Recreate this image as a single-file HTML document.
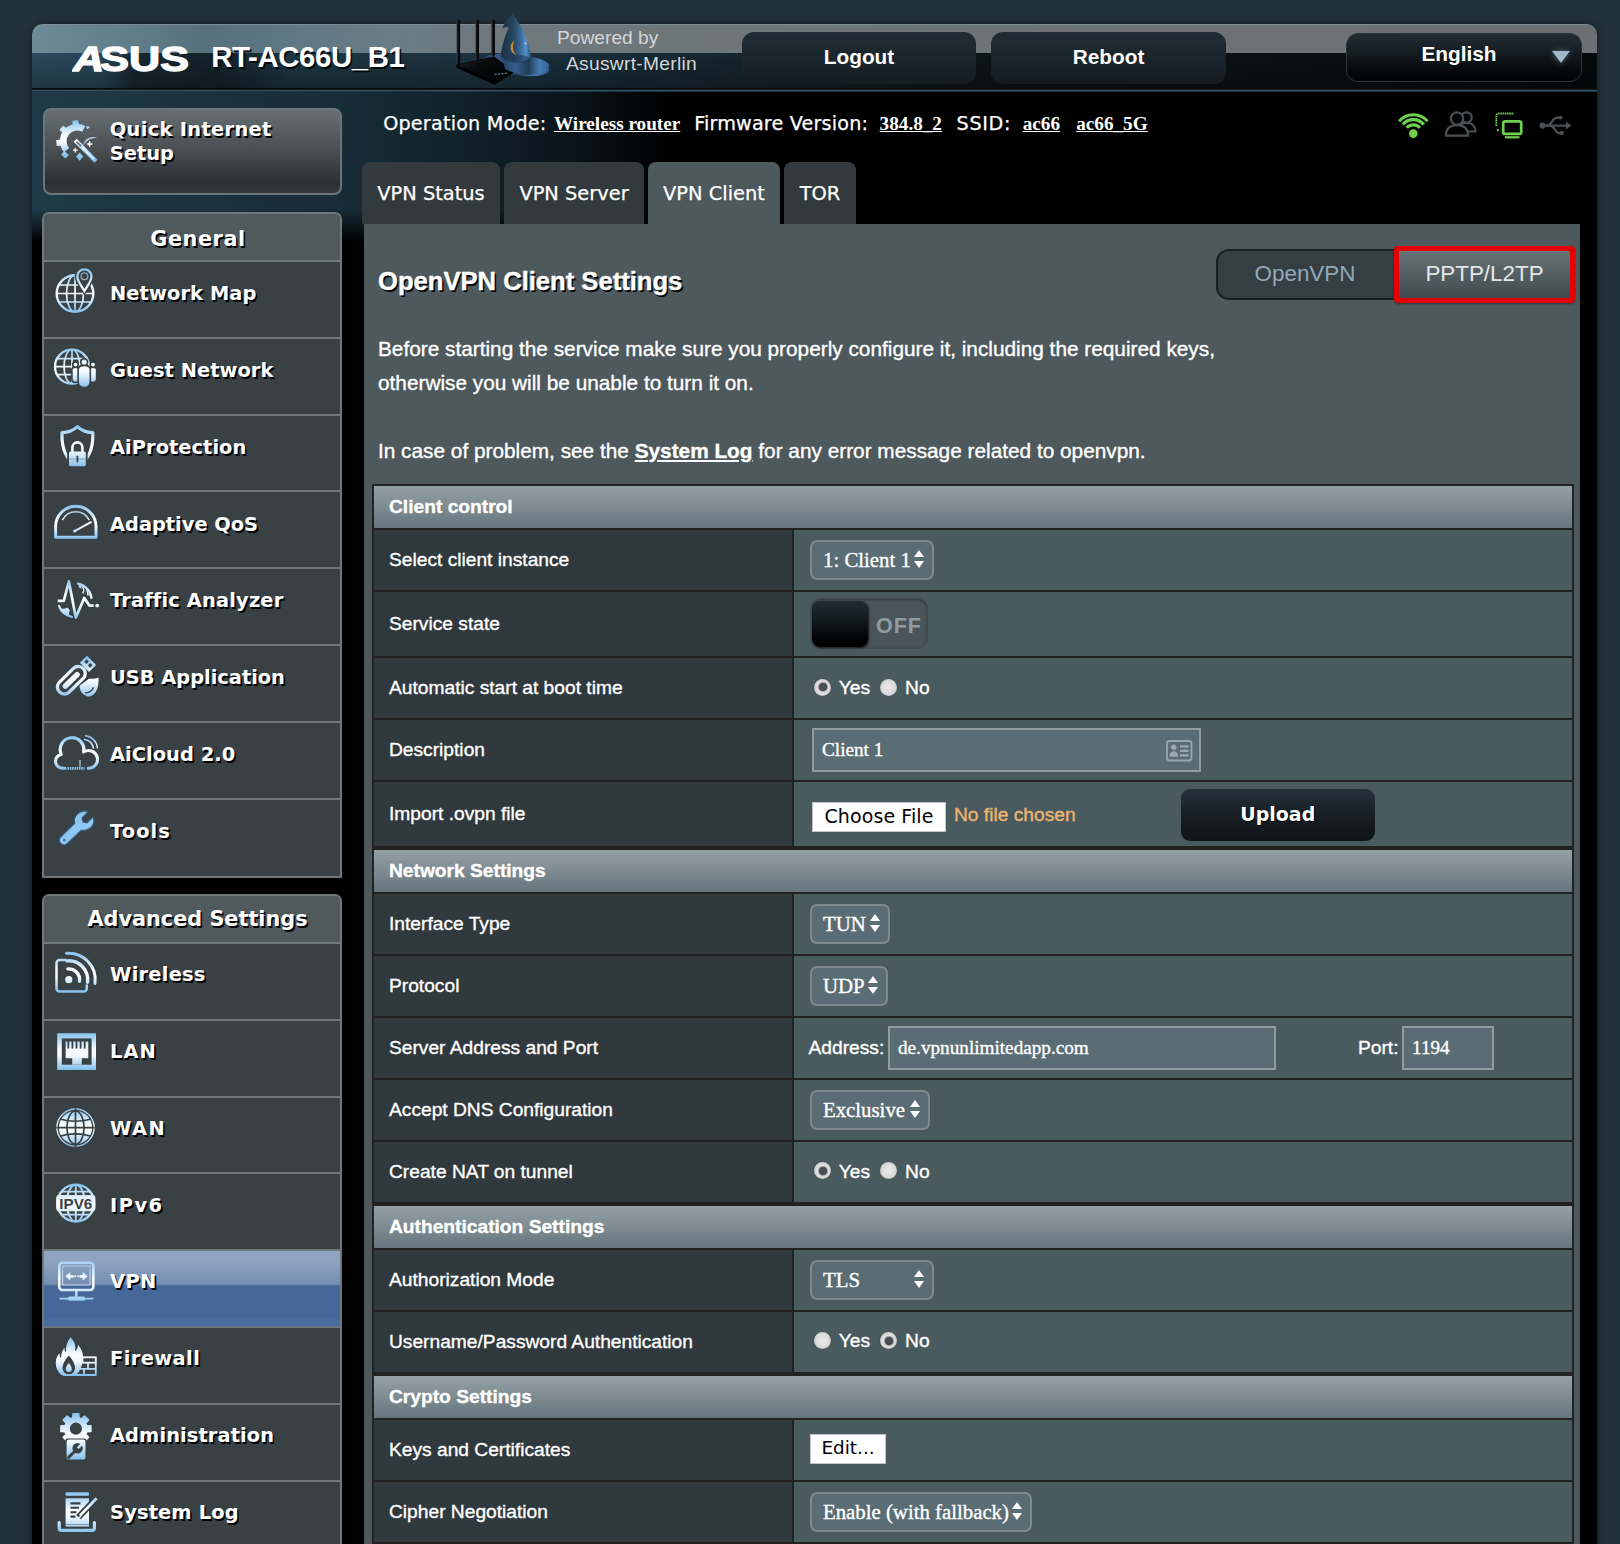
<!DOCTYPE html>
<html lang="en">
<head>
<meta charset="utf-8">
<title>ASUS Wireless Router RT-AC66U_B1 - OpenVPN Client Settings</title>
<style>
*{box-sizing:border-box;margin:0;padding:0}
html,body{width:1620px;height:1544px;overflow:hidden}
body{background:#22323d;font-family:"Liberation Sans",Arial,sans-serif;color:#fff;position:relative}
.a{position:absolute}
a{color:#fff;text-decoration:underline}
.dj{font-family:"DejaVu Sans","Liberation Sans",sans-serif}
.sf{font-family:"Liberation Serif","DejaVu Serif",serif}
#frame{left:32px;top:24px;width:1565px;height:1540px;background:#000;border-radius:10px 10px 0 0;overflow:hidden;box-shadow:0 0 8px rgba(0,0,0,.45)}
#banner{left:0;top:0;width:1565px;height:29px;background:linear-gradient(90deg,#6c8a98 0,#617c89 7%,#56707c 11%,#5d7783 16%,#697d86 23%,#6e787d 29%,#6d7477 50%,#6b7073 100%);border-top:1px solid #7d8d95}
#bannerhi{left:0;top:29px;width:1565px;height:37px;background:linear-gradient(90deg,#2a4a5c 0,#28475a 4.5%,#18282f 6.5%,#14222a 12%,#1d3642 16.5%,#1b323e 30%,#15252d 45%,#0d161b 60%,#070b0d 100%)}
#bannerdark{left:0;top:29px;width:1565px;height:37px;background:linear-gradient(180deg,rgba(0,0,0,0) 0,rgba(0,0,0,.28) 100%)}
#hline{left:0;top:64px;width:1565px;height:4px;background:linear-gradient(180deg,#05090b 0,#05090b 30%,#3a5361 55%,#1a2c36 100%)}
#leftcol{left:0;top:68px;width:660px;height:150px;background:linear-gradient(180deg,rgba(0,0,0,0) 0,rgba(0,0,0,0) 78%,#000 100%),linear-gradient(90deg,#1f3b4a 0,#1d3744 60px,#172d38 300px,#12232c 420px,#0a141a 540px,#000 640px)}
.hbtn{height:52px;border-radius:12px;background:linear-gradient(180deg,#212d34 0,#1a242b 55%,#141c21 100%);text-align:center;font-weight:bold;font-size:20.8px;line-height:50px;color:#fff}
.mblock{left:42px;width:300px;border:2px solid #70777a;border-radius:7px 7px 0 0;background:#3a4144;overflow:hidden}
.mhead{left:0;top:0;width:296px;height:46px;padding:0 0 0 9px;background:#50595c;text-align:center;font-weight:bold;font-size:20.8px;line-height:46px;text-shadow:1.6px 1.6px 0 #000}
.ml{left:0;width:296px;height:2px;background:#70777a}
.mt{left:66px;font-weight:bold;font-size:19.4px;line-height:24px;text-shadow:1.6px 1.6px 0 #000;white-space:nowrap;letter-spacing:-.05px}
.cur{left:0;width:296px;background:linear-gradient(180deg,#8fa4c0 0,#8fa4c0 10px,#8399b9 20px,#7891b4 33px,#4a6a9b 35px,#466799 36px,#466799 67px,#4a6ca1 69px,#4a6ca1 100%)}
.tab{top:162px;height:62px;border-radius:8px 8px 0 0;background:#333a3e;font-size:19.4px;line-height:64px;-webkit-text-stroke:.25px #fff;text-align:center;color:#fff}
.tab.on{background:#4d595d}
#panel{left:364px;top:224px;width:1216px;height:1400px;background:#4d595d}
.txt{white-space:nowrap;font-size:20.8px;line-height:26px;-webkit-text-stroke:.35px #fff}
.th{left:372px;width:1202px;height:46px;border:2px solid #222;background:linear-gradient(180deg,#93a1a6 0,#7e8c92 50%,#66757c 100%);font-weight:bold;font-size:19.2px;line-height:41px;padding-left:15px;white-space:nowrap;-webkit-text-stroke:.35px #fff}
.row{left:372px;width:1202px;border:2px solid #222;border-top:none;background:#4a5b60}
.row .l{position:absolute;left:0;top:0;bottom:0;width:420px;background:#30393d;border-right:2px solid #222;font-size:19.2px;padding-left:15px;display:flex;align-items:center;white-space:nowrap;-webkit-text-stroke:.35px #fff}
.sel{position:absolute;left:436px;height:40px;border:2px solid #7f8a8e;border-radius:7px;background:#5a6d74;font-family:"Liberation Serif",serif;font-size:20.8px;line-height:35.5px;padding-left:11px;white-space:nowrap;color:#fff;-webkit-text-stroke:.35px #fff}
.sel i{position:absolute;right:8px;top:8px;width:10px;height:20px}
.sel i:before{content:"";position:absolute;left:0;top:0;border:5px solid transparent;border-top:none;border-bottom:7px solid #fff}
.sel i:after{content:"";position:absolute;left:0;top:10.5px;border:5px solid transparent;border-bottom:none;border-top:7px solid #fff}
.inp{position:absolute;height:44px;border:2px solid #909c9f;background:#5a6d74;font-family:"Liberation Serif",serif;font-size:19.2px;line-height:40px;padding-left:8px;white-space:nowrap;-webkit-text-stroke:.35px #fff}
.rad{position:absolute;width:17px;height:17px;border-radius:50%;background:radial-gradient(circle at 50% 50%,#e9e9e9 0,#dcdcdc 55%,#b9b9b9 80%,#8c8f90 100%);box-shadow:0 0 0 1px rgba(70,80,84,.55)}
.rad.on:after{content:"";position:absolute;left:4.5px;top:4.5px;width:8px;height:8px;border-radius:50%;background:#4a4e50;box-shadow:0 0 0 1px rgba(90,90,90,.5)}
.rl{position:absolute;font-size:19.2px;line-height:24px;white-space:nowrap;-webkit-text-stroke:.35px #fff}
</style>
</head>
<body>
<div id="frame" class="a">
<div id="banner" class="a"></div><div id="bannerhi" class="a"></div><div id="bannerdark" class="a"></div><div id="leftcol" class="a"></div><div id="hline" class="a"></div>
</div>
<div class="a" style="left:71.5px;top:40px;width:130px;height:40px"><svg width="130" height="40" viewBox="0 0 130 40"><text x="1" y="31.4" font-family="Liberation Sans,sans-serif" font-weight="bold" font-size="34.5" fill="#fff" stroke="#fff" stroke-width="1.3" textLength="116" lengthAdjust="spacingAndGlyphs"><tspan font-style="italic">A</tspan><tspan dx="-3">SUS</tspan></text></svg></div>
<div class="a" style="left:211.3px;top:38.5px;font-weight:bold;font-size:29.4px;line-height:36px;letter-spacing:-.4px;white-space:nowrap;text-shadow:1.6px 1.6px 0 rgba(0,0,0,.85)">RT-AC66U_B1</div>
<div class="a" style="left:450px;top:10px;width:104px;height:80px"><svg width="110" height="84" viewBox="0 0 110 84"><defs><linearGradient id="hat1" x1="0" y1="0" x2="1" y2="0"><stop offset="0" stop-color="#1b3144"/><stop offset=".42" stop-color="#27465e"/><stop offset=".66" stop-color="#3b6b9c"/><stop offset=".82" stop-color="#5690cc"/><stop offset="1" stop-color="#254568"/></linearGradient><linearGradient id="hat2" x1="0" y1="0" x2="1" y2="0"><stop offset="0" stop-color="#27446a"/><stop offset=".28" stop-color="#365d8c"/><stop offset=".55" stop-color="#213c55"/><stop offset=".8" stop-color="#477db6"/><stop offset="1" stop-color="#345f92"/></linearGradient><linearGradient id="rt1" x1="0" y1="0" x2="1" y2="1"><stop offset="0" stop-color="#2a3034"/><stop offset=".35" stop-color="#0a0c0d"/><stop offset="1" stop-color="#000"/></linearGradient><linearGradient id="ant" x1="0" y1="0" x2="1" y2="0"><stop offset="0" stop-color="#3a4044"/><stop offset=".45" stop-color="#0c0e0f"/><stop offset="1" stop-color="#000"/></linearGradient></defs><ellipse cx="66" cy="55" rx="33.500" ry="10" fill="url(#hat2)" transform="rotate(9 66 55)"/><rect x="6.5" y="9.6" width="3.600" height="45.4" rx="1.600" fill="url(#ant)"/><rect x="25.4" y="9.6" width="3.600" height="40.4" rx="1.600" fill="url(#ant)"/><rect x="41.3" y="9.6" width="3.600" height="36.4" rx="1.600" fill="url(#ant)"/><path d="M6.3,54.8L44.0,46.6L63.5,60.5L63.5,63.0L44.5,74.8L6.3,57.8Z" fill="#000"/><path d="M7.5,54.9L44.0,47.2L62.0,60.6L44.4,71.2Z" fill="url(#rt1)"/><rect x="44.5" y="63.5" width="2.200" height="1.500" fill="#4a6f90"/><rect x="47.9" y="63.2" width="2.200" height="1.500" fill="#4a6f90"/><rect x="51.3" y="62.9" width="2.200" height="1.500" fill="#4a6f90"/><rect x="54.7" y="62.6" width="2.200" height="1.500" fill="#4a6f90"/><path d="M55.0,59.0C62.0,63.0 74.0,66.0 86.0,64.5C95.0,63.0 100.0,58.0 99.0,54.5C97.0,51.0 90.0,48.5 81.0,47.0L53.0,50.0Z" fill="url(#hat2)"/><path d="M50.5,46.0C52.5,34.0 55.5,24.0 59.0,17.5C57.0,16.3 54.5,17.0 52.3,18.6C54.5,11.5 59.0,6.0 63.3,4.6C71.0,15.0 78.5,31.0 81.5,46.5C76.0,53.5 58.0,54.0 50.5,46.0Z" fill="url(#hat1)"/><ellipse cx="66" cy="48.5" rx="15.500" ry="4.200" fill="#1e3850" opacity=".55" transform="rotate(4 66 48.5)"/><path d="M64.5,30.5C59.0,34.0 59.0,42.0 66.5,45.5C62.5,41.5 62.0,35.5 64.5,30.5Z" fill="#d08a36"/><circle cx="75.5" cy="33.5" r=".9" fill="#e3d9b8"/></svg></div>
<div class="a" style="left:557px;top:26px;font-size:19.2px;line-height:24px;color:#d3d6d8;white-space:nowrap">Powered by</div>
<div class="a" style="left:566px;top:52px;font-size:19.2px;line-height:24px;color:#d3d6d8;white-space:nowrap;letter-spacing:.3px">Asuswrt-Merlin</div>
<div class="a hbtn" style="left:742px;top:32px;width:234px;line-height:49px">Logout</div>
<div class="a hbtn" style="left:991px;top:32px;width:235px;line-height:49px">Reboot</div>
<div class="a hbtn" style="left:1345.5px;top:32.5px;width:236px;height:49px;border:1.6px solid #2b363d;background:linear-gradient(180deg,#222d34 0,#121a1f 45%,#05080a 80%,#020304 100%);line-height:40px;padding-right:9px">English<i class="a" style="right:11px;top:17.5px;border:9px solid transparent;border-top:12px solid #a3b8cb;border-bottom:none;filter:drop-shadow(0 0 3px rgba(140,170,200,.55))"></i></div>
<div class="a dj" style="left:383.2px;top:112.3px;font-size:19.2px;line-height:24px;white-space:nowrap;letter-spacing:0.2px;-webkit-text-stroke:.25px #fff">Operation Mode:</div>
<a class="a sf" style="left:554px;top:112px;font-weight:bold;font-size:19.2px;line-height:24px;white-space:nowrap">Wireless router</a>
<div class="a dj" style="left:694.2px;top:112.3px;font-size:19.2px;line-height:24px;white-space:nowrap;letter-spacing:0.17px;-webkit-text-stroke:.25px #fff">Firmware Version:</div>
<a class="a sf" style="left:879.6px;top:112px;font-weight:bold;font-size:19.2px;line-height:24px;white-space:nowrap">384.8_2</a>
<div class="a dj" style="left:956.5px;top:112.3px;font-size:19.2px;line-height:24px;white-space:nowrap;letter-spacing:0.7px;-webkit-text-stroke:.25px #fff">SSID:</div>
<a class="a sf" style="left:1022.7px;top:112px;font-weight:bold;font-size:19.2px;line-height:24px;white-space:nowrap">ac66</a>
<a class="a sf" style="left:1076.2px;top:112px;font-weight:bold;font-size:19.2px;line-height:24px;white-space:nowrap">ac66_5G</a>
<div class="a" style="left:1394px;top:108px;width:184px;height:36px"><svg width="184" height="36" viewBox="0 0 184 36"><circle cx="19.3" cy="25.6" r="4.300" fill="#6fd24d"/><path d="M12.7,19.8A8.8,8.8 0 0 1 25.9,19.8" fill="none" stroke="#6fd24d" stroke-width="3.2"/><path d="M8.8,16.5A13.9,13.9 0 0 1 29.8,16.5" fill="none" stroke="#6fd24d" stroke-width="3.2"/><path d="M5.1,13.3A18.8,18.8 0 0 1 33.5,13.3" fill="none" stroke="#6fd24d" stroke-width="3"/><g fill="#000" stroke="#4b5053" stroke-width="2.200"><circle cx="72.5" cy="9.5" r="5.200"/><path d="M63,23.5c0,-5.500 4,-8.500 9.500,-8.500s9,3 9,8.500Z"/><circle cx="63" cy="10.599999999999994" r="6.200"/><path d="M52,27.599999999999994c0,-7 4,-10.500 11,-10.500s11,3.500 11,10.500Z"/></g><rect x="109.20000000000005" y="13.299999999999997" width="18" height="12.600" rx="2" fill="none" stroke="#6fd24d" stroke-width="2.700"/><path d="M111,29.30000000000001H125.5" stroke="#6fd24d" stroke-width="2.200"/><path d="M102.29999999999995,18V8a2.500,2.500 0 0 1 2.500,-2.500H120" fill="none" stroke="#6fd24d" stroke-width="1.800" stroke-dasharray="1.500 .7"/><rect x="102.79999999999995" y="21" width="2.200" height="2.400" fill="#6fd24d" opacity=".8"/><g fill="none" stroke="#4b5053" stroke-width="2.200" stroke-linecap="round"><path d="M149,17.599999999999994H172"/><path d="M153,17.599999999999994c5,0 5,-8 10,-8h2.500"/><path d="M156,17.599999999999994c5,0 5,7.600 9,7.600h2"/></g><circle cx="148.5" cy="17.599999999999994" r="3.100" fill="#4b5053"/><path d="M172,13.599999999999994l5.500,4l-5.500,4Z" fill="#4b5053"/><circle cx="166.5" cy="9.599999999999994" r="1.900" fill="#4b5053"/><rect x="166" y="23.19999999999999" width="3.600" height="3.600" fill="#4b5053"/></svg></div>
<div class="a" style="left:43px;top:108px;width:299px;height:87px;border:2px solid #6d7477;border-radius:8px;background:linear-gradient(180deg,#676e71 0,#4b5154 45%,#2c3032 88%,#36393b 100%)"><div class="a" style="left:7px;top:6px;width:52px;height:52px"><svg width="52" height="52" viewBox="0 0 52 52"><defs><linearGradient id="g1" gradientUnits="userSpaceOnUse" x1="0" y1="4" x2="0" y2="40"><stop offset="0" stop-color="#84c1ef"/><stop offset=".42" stop-color="#f6fbff"/><stop offset=".6" stop-color="#f6fbff"/><stop offset="1" stop-color="#7fbdec"/></linearGradient></defs><path d="M33.3,10.0A17.2,17.2 0 0 0 12.0,36.3L17.1,32.0A10.6,10.6 0 0 1 30.2,15.8Z" fill="url(#g1)"/><path d="M20.7,9.6L20.5,4.7L26.3,4.2L26.9,9.1Z" fill="url(#g1)"/><path d="M11.0,17.3L7.4,14.1L11.1,9.6L15.0,12.6Z" fill="url(#g1)"/><path d="M9.6,29.7L4.7,29.9L4.2,24.1L9.1,23.5Z" fill="url(#g1)"/><path d="M16.9,39.1L13.5,42.6L9.1,38.7L12.3,34.9Z" fill="url(#g1)"/><path d="M33.8,10.3l4.500,0.500l-3,2.500Z" fill="url(#g1)"/><path d="M31,30C32,23 39,18.5 46,22.5C40,21 35,24 31,30Z" fill="#cfe4f5" opacity=".85"/><path d="M23.200000000000003,24.30000000000001L44,45.30000000000001" stroke="url(#g1)" stroke-width="4.400"/><path d="M24.5,25.599999999999994L29.200000000000003,30.30000000000001" stroke="#6d7f8d" stroke-width="2"/><path d="M30.5,31.599999999999994L42,43.30000000000001" stroke="#fff" stroke-width="1.600" opacity=".8"/><path d="M37.599999999999994,25.2Q37.599999999999994,28 40.39999999999999,28Q37.599999999999994,28 37.599999999999994,30.8Q37.599999999999994,28 34.8,28Q37.599999999999994,28 37.599999999999994,25.2Z" fill="#fff" stroke="#fff" stroke-width=".8"/><path d="M23.299999999999997,31.899999999999988Q23.299999999999997,34.19999999999999 25.599999999999998,34.19999999999999Q23.299999999999997,34.19999999999999 23.299999999999997,36.499999999999986Q23.299999999999997,34.19999999999999 20.999999999999996,34.19999999999999Q23.299999999999997,34.19999999999999 23.299999999999997,31.899999999999988Z" fill="#dfeaf3" stroke="#dfeaf3" stroke-width=".8"/><path d="M27.599999999999994,36.599999999999994l3.600,4l-3.600,4.200l-3.600,-4.200Z" fill="#8ec8f2"/></svg></div><div class="a dj" style="left:64.8px;top:8.3px;font-weight:bold;font-size:19.4px;line-height:23.8px;text-shadow:1.6px 1.6px 0 #000;white-space:nowrap"><span style="letter-spacing:.32px">Quick Internet</span><br>Setup</div></div>
<div class="a mblock dj" style="top:212px;height:666px"><div class="a mhead" style="padding:2px 0 0 12px;letter-spacing:.55px">General</div>
<div class="a ml" style="top:46px"></div>
<div class="a" style="left:1px;top:49.9px;width:62px;height:62px"><svg width="60" height="60" viewBox="0 0 60 60" style="position:absolute;left:0;top:0;"><defs><linearGradient id="g2" gradientUnits="userSpaceOnUse" x1="0" y1="5" x2="0" y2="49"><stop offset="0" stop-color="#84c1ef"/><stop offset=".42" stop-color="#f6fbff"/><stop offset=".6" stop-color="#f6fbff"/><stop offset="1" stop-color="#7fbdec"/></linearGradient></defs><g fill="none" stroke="url(#g2)" stroke-width="2.4"><circle cx="30" cy="29.5" r="18.3"/><g stroke-width="1.7"><ellipse cx="30" cy="29.5" rx="8.5" ry="18.3"/><path d="M30,11.2V47.8M11.7,29.5H48.3M14,21.0H46M14,38.0H46"/></g></g><path d="M39.4,28.5C35,21 31.3,17 31.3,12.4a8.1,8.1 0 0 1 16.2,0C47.5,17 43.8,21 39.4,28.5Z" fill="#3a4144" stroke="#3a4144" stroke-width="3.2"/><path d="M39.4,27C35.5,20.5 32.3,16.6 32.3,12.4a7.1,7.1 0 0 1 14.2,0C46.5,16.6 43.3,20.5 39.4,27Z" fill="none" stroke="url(#g2)" stroke-width="2.2"/><circle cx="39.4" cy="12.2" r="3.4" fill="none" stroke="url(#g2)" stroke-width="1.2" opacity=".7"/></svg></div>
<div class="a mt" style="top:68.1px;letter-spacing:0.1px">Network Map</div>
<div class="a ml" style="top:123px"></div>
<div class="a" style="left:1px;top:126.7px;width:62px;height:62px"><svg width="60" height="60" viewBox="0 0 60 60" style="position:absolute;left:0;top:0;"><defs><linearGradient id="g3" gradientUnits="userSpaceOnUse" x1="0" y1="7" x2="0" y2="47"><stop offset="0" stop-color="#84c1ef"/><stop offset=".42" stop-color="#f6fbff"/><stop offset=".6" stop-color="#f6fbff"/><stop offset="1" stop-color="#7fbdec"/></linearGradient></defs><g fill="none" stroke="url(#g3)" stroke-width="2.3"><circle cx="27" cy="25.7" r="17"/><g stroke-width="1.7"><ellipse cx="27" cy="25.7" rx="8" ry="17"/><path d="M27,8.7V42.7M10,25.7H44M12,17.7H42M12,33.7H42"/></g></g><circle cx="30.5" cy="23.6" r="1.9" fill="#3a4144" stroke="#3a4144" stroke-width="3.4"/><path d="M27.7,28.96Q27.7,27 30.5,27Q33.3,27 33.3,28.96V37.42Q33.3,40.5 30.5,40.5Q27.7,40.5 27.7,37.42Z" fill="#3a4144" stroke="#3a4144" stroke-width="3.4"/><circle cx="48" cy="23.6" r="1.9" fill="#3a4144" stroke="#3a4144" stroke-width="3.4"/><path d="M45.2,28.96Q45.2,27 48,27Q50.8,27 50.8,28.96V37.42Q50.8,40.5 48,40.5Q45.2,40.5 45.2,37.42Z" fill="#3a4144" stroke="#3a4144" stroke-width="3.4"/><circle cx="30.5" cy="23.6" r="1.9" fill="url(#g3)"/><path d="M27.7,28.96Q27.7,27 30.5,27Q33.3,27 33.3,28.96V37.42Q33.3,40.5 30.5,40.5Q27.7,40.5 27.7,37.42Z" fill="url(#g3)"/><circle cx="48" cy="23.6" r="1.9" fill="url(#g3)"/><path d="M45.2,28.96Q45.2,27 48,27Q50.8,27 50.8,28.96V37.42Q50.8,40.5 48,40.5Q45.2,40.5 45.2,37.42Z" fill="url(#g3)"/><circle cx="39.2" cy="21" r="2.6" fill="#3a4144" stroke="#3a4144" stroke-width="3.2"/><path d="M33.900000000000006,28.91Q33.900000000000006,25.2 39.2,25.2Q44.5,25.2 44.5,28.91V39.97Q44.5,45.8 39.2,45.8Q33.900000000000006,45.8 33.900000000000006,39.97Z" fill="#3a4144" stroke="#3a4144" stroke-width="3.2"/><circle cx="39.2" cy="21" r="2.6" fill="url(#g3)"/><path d="M33.900000000000006,28.91Q33.900000000000006,25.2 39.2,25.2Q44.5,25.2 44.5,28.91V39.97Q44.5,45.8 39.2,45.8Q33.900000000000006,45.8 33.900000000000006,39.97Z" fill="url(#g3)"/></svg></div>
<div class="a mt" style="top:144.9px;letter-spacing:0.05px">Guest Network</div>
<div class="a ml" style="top:200px"></div>
<div class="a" style="left:1px;top:203.5px;width:62px;height:62px"><svg width="60" height="60" viewBox="0 0 60 60" style="position:absolute;left:0;top:0;"><defs><linearGradient id="g4" gradientUnits="userSpaceOnUse" x1="0" y1="7" x2="0" y2="49"><stop offset="0" stop-color="#84c1ef"/><stop offset=".42" stop-color="#f6fbff"/><stop offset=".6" stop-color="#f6fbff"/><stop offset="1" stop-color="#7fbdec"/></linearGradient></defs><path d="M32.4,8.6C28,12.8 22,14.4 17,14.6C16.6,28 19,41.5 32.4,47.6C45.8,41.5 48.2,28 47.8,14.6C42.8,14.4 36.8,12.8 32.4,8.6Z" fill="none" stroke="url(#g4)" stroke-width="3.2" stroke-linejoin="round"/><rect x="22.2" y="31.5" width="20.4" height="18.5" rx="2" fill="#3a4144"/><path d="M27.4,34V29.4a5,5 0 0 1 10,0V34" fill="none" stroke="#3a4144" stroke-width="6"/><path d="M27.4,34V29.4a5,5 0 0 1 10,0V34" fill="none" stroke="url(#g4)" stroke-width="2.6"/><rect x="24" y="33.4" width="16.8" height="14.8" rx="1.6" fill="url(#g4)"/><path d="M32.4,38.5V43.5" stroke="#3a4144" stroke-width="1.8" stroke-linecap="round"/><path d="M24.5,41H40.3" stroke="#3a4144" stroke-width=".7" opacity=".5"/></svg></div>
<div class="a mt" style="top:221.7px;letter-spacing:0.05px">AiProtection</div>
<div class="a ml" style="top:276px"></div>
<div class="a" style="left:1px;top:280.3px;width:62px;height:62px"><svg width="62" height="60" viewBox="0 0 62 60" style="position:absolute;left:0;top:0;"><defs><linearGradient id="g5" gradientUnits="userSpaceOnUse" x1="0" y1="11" x2="0" y2="45"><stop offset="0" stop-color="#84c1ef"/><stop offset=".42" stop-color="#f6fbff"/><stop offset=".6" stop-color="#f6fbff"/><stop offset="1" stop-color="#7fbdec"/></linearGradient></defs><path d="M10.6,43.2V32.5a20.2,20.2 0 0 1 40.4,0V43.2Z" fill="none" stroke="url(#g5)" stroke-width="3" stroke-linejoin="round"/><path d="M17.4,26.2A14.8,14.8 0 0 1 44.2,26.2" fill="none" stroke="url(#g5)" stroke-width="1.6" opacity=".9"/><path d="M29.6,37.2L46,28.2" stroke="url(#g5)" stroke-width="2" stroke-linecap="round"/><circle cx="29.8" cy="37" r="1.6" fill="url(#g5)"/></svg></div>
<div class="a mt" style="top:298.5px;letter-spacing:0px">Adaptive QoS</div>
<div class="a ml" style="top:353px"></div>
<div class="a" style="left:1px;top:357.1px;width:62px;height:62px"><svg width="60" height="60" viewBox="0 0 60 60" style="position:absolute;left:0;top:0;"><defs><linearGradient id="g6" gradientUnits="userSpaceOnUse" x1="0" y1="8" x2="0" y2="49"><stop offset="0" stop-color="#84c1ef"/><stop offset=".42" stop-color="#f6fbff"/><stop offset=".6" stop-color="#f6fbff"/><stop offset="1" stop-color="#7fbdec"/></linearGradient></defs><g fill="none" stroke="url(#g6)" stroke-width="2.2" stroke-linecap="round"><path d="M33,12.6A16.5,16.5 0 0 1 46.4,27"/><path d="M14,35A16.5,16.5 0 0 0 27,45.8"/><path d="M37,14.8q3,4 1,7M41.5,18q1.5,3 1.5,6" stroke-width="1.6"/></g><path d="M15.5,37.5q4,1 7,-1l2.5,3q-2,3 0,6q-6,-2 -9.500,-8Z" fill="url(#g6)"/><path d="M34.5,12.5q2.500,2.500 2,5.500l-3,-2Z" fill="url(#g6)"/><path d="M12.7,29.9H18.8L23.9,10.4L30.8,46.6L39.2,27L44.4,34.6H48.7" fill="none" stroke="#3a4144" stroke-width="5.6" stroke-linejoin="round"/><path d="M12.7,29.9H18.8L23.9,10.4L30.8,46.6L39.2,27L44.4,34.6H48.7" fill="none" stroke="url(#g6)" stroke-width="2.7" stroke-linejoin="round"/><circle cx="52.2" cy="34.6" r="1.9" fill="url(#g6)"/></svg></div>
<div class="a mt" style="top:375.3px;letter-spacing:0.17px">Traffic Analyzer</div>
<div class="a ml" style="top:430px"></div>
<div class="a" style="left:1px;top:433.9px;width:62px;height:62px"><svg width="62" height="60" viewBox="0 0 62 60" style="position:absolute;left:0;top:0;"><defs><linearGradient id="g7" gradientUnits="userSpaceOnUse" x1="0" y1="9" x2="0" y2="50"><stop offset="0" stop-color="#84c1ef"/><stop offset=".42" stop-color="#f6fbff"/><stop offset=".6" stop-color="#f6fbff"/><stop offset="1" stop-color="#7fbdec"/></linearGradient><linearGradient id="g8" gradientUnits="userSpaceOnUse" x1="23.27" y1="-23.68" x2="-5.47" y2="5.56"><stop offset="0" stop-color="#84c1ef"/><stop offset=".42" stop-color="#f6fbff"/><stop offset=".6" stop-color="#f6fbff"/><stop offset="1" stop-color="#7fbdec"/></linearGradient></defs><path d="M44,30.800c5,0 8.500,-0.500 9.500,-1.500c0.500,9 -1.500,17.500 -9.500,19.500c-6,-1 -9.500,-6 -9.500,-11Z" fill="url(#g7)"/><path d="M40,44.800q6,0.500 8.500,-5.500" fill="none" stroke="#3a4144" stroke-width="1.400"/><g transform="translate(16.2,42.2) rotate(-44.5)"><rect x="-7" y="-9.2" width="40.5" height="18.400" rx="9.2" fill="#3a4144"/><rect x="-2.5" y="-7" width="33.5" height="14" rx="7" fill="none" stroke="url(#g8)" stroke-width="3.300"/><rect x="3" y="-2.700" width="22" height="5.400" rx="2.700" fill="url(#g8)"/><rect x="32.600" y="-6.500" width="10" height="13" fill="url(#g8)"/><rect x="36.400" y="-4.200" width="3.400" height="3.200" fill="#3a4144"/><rect x="36.400" y="1" width="3.400" height="3.200" fill="#3a4144"/></g></svg></div>
<div class="a mt" style="top:452.1px;letter-spacing:0px">USB Application</div>
<div class="a ml" style="top:507px"></div>
<div class="a" style="left:1px;top:510.7px;width:62px;height:62px"><svg width="62" height="60" viewBox="0 0 62 60" style="position:absolute;left:0;top:0;"><defs><linearGradient id="g9" gradientUnits="userSpaceOnUse" x1="0" y1="11" x2="0" y2="45"><stop offset="0" stop-color="#84c1ef"/><stop offset=".42" stop-color="#f6fbff"/><stop offset=".6" stop-color="#f6fbff"/><stop offset="1" stop-color="#7fbdec"/></linearGradient></defs><path d="M20,43.300H17.500a7,7 0 0 1 -1.220,-13.890a11.800,11.800 0 1 1 22.220,-2.310a8.900,8.900 0 1 1 5.100,16.200H43.300" fill="none" stroke="url(#g9)" stroke-width="3.100" stroke-linecap="round" stroke-linejoin="round"/><path d="M22.500,43.300H39.500" stroke="url(#g9)" stroke-width="2.800" stroke-dasharray="1.500 .8"/><path d="M35,35V42" stroke="url(#g9)" stroke-width="1.100"/><g fill="none" stroke="url(#g9)" stroke-linecap="round"><path d="M39.500,14.500a10,10 0 0 1 9,8.500" stroke-width="1.700"/><path d="M40.500,10.800a13.500,13.500 0 0 1 12,12" stroke-width="1.500"/></g></svg></div>
<div class="a mt" style="top:528.9px;letter-spacing:0.05px">AiCloud 2.0</div>
<div class="a ml" style="top:584px"></div>
<div class="a" style="left:1px;top:587.5px;width:62px;height:62px"><svg width="60" height="60" viewBox="0 0 60 60" style="position:absolute;left:0;top:0;"><defs><filter id="tglow" x="-30%" y="-30%" width="160%" height="160%"><feGaussianBlur stdDeviation="1.300"/></filter></defs><path d="M16.300,35.200L30.400,21.600a9.300,9.300 0 0 1 11.600,-11.500l-5.600,5.700l1,4.700l4.700,1l5.700,-5.600a9.300,9.300 0 0 1 -11.600,11.500L21.900,41a4,4 0 0 1 -5.600,-5.800Z" fill="#3f77b0" stroke="#3a6fa8" stroke-width="2.600" stroke-linejoin="round" opacity=".55"/><path d="M16.300,35.200L30.400,21.600a9.300,9.300 0 0 1 11.600,-11.500l-5.600,5.700l1,4.700l4.700,1l5.700,-5.600a9.300,9.300 0 0 1 -11.600,11.500L21.900,41a4,4 0 0 1 -5.600,-5.800Z" fill="#8ec8f2"/><circle cx="19.300" cy="38.100" r="1.500" fill="#4b78a3"/></svg></div>
<div class="a mt" style="top:605.7px;letter-spacing:1.1px">Tools</div>
</div>
<div class="a mblock dj" style="top:894px;height:700px"><div class="a mhead" style="padding:0.2px 0 0 11px">Advanced Settings</div>
<div class="a ml" style="top:46px"></div>
<div class="a" style="left:1px;top:48.9px;width:62px;height:62px"><svg width="62" height="60" viewBox="0 0 62 60" style="position:absolute;left:0;top:0;"><defs><linearGradient id="g10" gradientUnits="userSpaceOnUse" x1="0" y1="7" x2="0" y2="48"><stop offset="0" stop-color="#84c1ef"/><stop offset=".42" stop-color="#f6fbff"/><stop offset=".6" stop-color="#f6fbff"/><stop offset="1" stop-color="#7fbdec"/></linearGradient></defs><path d="M20.500,14.900H14.500a3,3 0 0 0 -3,3V43.600a3,3 0 0 0 3,3H38.800a3,3 0 0 0 3,-3V40.500" fill="none" stroke="url(#g10)" stroke-width="2.500" stroke-linecap="round"/><circle cx="23.8" cy="34.7" r="3.600" fill="url(#g10)"/><path d="M22.9,23.9A10.8,10.8 0 0 1 34.5,36.2" fill="none" stroke="url(#g10)" stroke-width="3.4" stroke-linecap="round"/><path d="M22.2,15.9A18.9,18.9 0 0 1 42.5,37.3" fill="none" stroke="url(#g10)" stroke-width="3.4" stroke-linecap="round"/><path d="M21.5,8.3A26.5,26.5 0 0 1 50.0,38.4" fill="none" stroke="url(#g10)" stroke-width="3" stroke-linecap="round"/></svg></div>
<div class="a mt" style="top:67.1px;letter-spacing:0.25px">Wireless</div>
<div class="a ml" style="top:123px"></div>
<div class="a" style="left:1px;top:125.7px;width:62px;height:62px"><svg width="62" height="60" viewBox="0 0 62 60" style="position:absolute;left:0;top:0;"><defs><linearGradient id="g11" gradientUnits="userSpaceOnUse" x1="0" y1="11" x2="0" y2="48"><stop offset="0" stop-color="#84c1ef"/><stop offset=".42" stop-color="#f6fbff"/><stop offset=".6" stop-color="#f6fbff"/><stop offset="1" stop-color="#7fbdec"/></linearGradient></defs><rect x="12.200" y="11.200" width="38.800" height="36.800" fill="url(#g11)"/><rect x="16.800" y="16.400" width="29.800" height="26.300" fill="#3a4144"/><path d="M20.700,19.600V36.300H27.200V42.700H36.800V36.300H43.300V19.600Z" fill="url(#g11)"/><rect x="22.400000000000002" y="19" width="1.800" height="7.600" fill="#3a4144"/><rect x="26.5" y="19" width="1.800" height="7.600" fill="#3a4144"/><rect x="30.6" y="19" width="1.800" height="7.600" fill="#3a4144"/><rect x="34.7" y="19" width="1.800" height="7.600" fill="#3a4144"/><rect x="38.800000000000004" y="19" width="1.800" height="7.600" fill="#3a4144"/></svg></div>
<div class="a mt" style="top:143.9px;letter-spacing:1.1px">LAN</div>
<div class="a ml" style="top:200px"></div>
<div class="a" style="left:1px;top:202.5px;width:62px;height:62px"><svg width="62" height="60" viewBox="0 0 62 60" style="position:absolute;left:0;top:0;"><defs><linearGradient id="g12" gradientUnits="userSpaceOnUse" x1="0" y1="9" x2="0" y2="48"><stop offset="0" stop-color="#84c1ef"/><stop offset=".42" stop-color="#f6fbff"/><stop offset=".6" stop-color="#f6fbff"/><stop offset="1" stop-color="#7fbdec"/></linearGradient></defs><circle cx="30.5" cy="28.6" r="18.599999999999998" fill="none" stroke="url(#g12)" stroke-width="1.300"/><circle cx="30.5" cy="28.6" r="16.599999999999998" fill="url(#g12)"/><g fill="none" stroke="#3a4144" stroke-width="1.700"><ellipse cx="30.5" cy="28.6" rx="8.600" ry="16.599999999999998"/><path d="M30.5,9.400000000000002V47.8M11.3,28.6H49.7"/><path d="M15.0,20.0q15.500,4.500 31,0M15.0,37.2q15.500,-4.500 31,0"/></g></svg></div>
<div class="a mt" style="top:220.7px;letter-spacing:1.5px">WAN</div>
<div class="a ml" style="top:276px"></div>
<div class="a" style="left:1px;top:279.3px;width:62px;height:62px"><svg width="62" height="60" viewBox="0 0 62 60" style="position:absolute;left:0;top:0;"><defs><linearGradient id="g13" gradientUnits="userSpaceOnUse" x1="0" y1="9" x2="0" y2="48"><stop offset="0" stop-color="#84c1ef"/><stop offset=".42" stop-color="#f6fbff"/><stop offset=".6" stop-color="#f6fbff"/><stop offset="1" stop-color="#7fbdec"/></linearGradient></defs><g fill="none" stroke="url(#g13)" stroke-width="2.300"><circle cx="30.8" cy="28.1" r="18.4"/><g stroke-width="1.900"><ellipse cx="30.8" cy="28.1" rx="9" ry="18.4"/><path d="M30.8,9.700000000000003V46.5M16.3,16.6H45.3M16.3,39.6H45.3"/></g></g><rect x="11.200000000000003" y="19.900000000000002" width="39.199999999999996" height="16.400" rx="3" fill="url(#g13)"/><text x="30.8" y="33.7" text-anchor="middle" font-family="Liberation Sans,sans-serif" font-weight="bold" font-size="15.500" fill="#3a4144" textLength="33" lengthAdjust="spacingAndGlyphs">IPV6</text></svg></div>
<div class="a mt" style="top:297.5px;letter-spacing:1.5px">IPv6</div>
<div class="a cur" style="top:355px;height:75px"></div>
<div class="a ml" style="top:353px"></div>
<div class="a" style="left:1px;top:356.1px;width:62px;height:62px"><svg width="62" height="60" viewBox="0 0 62 60" style="position:absolute;left:0;top:0;"><defs><linearGradient id="g14" gradientUnits="userSpaceOnUse" x1="0" y1="9" x2="0" y2="50"><stop offset="0" stop-color="#9fd0f5"/><stop offset=".42" stop-color="#f2f9ff"/><stop offset=".6" stop-color="#f2f9ff"/><stop offset="1" stop-color="#8cc6f0"/></linearGradient></defs><rect x="14.300" y="10.800" width="34" height="27.200" rx="3" fill="none" stroke="url(#g14)" stroke-width="2.600"/><rect x="17.600" y="14" width="27.400" height="19" fill="none" stroke="url(#g14)" stroke-width="1" opacity=".75"/><path d="M20.300,24.300l5,-4.300v2.900h3.200v2.800h-3.200v2.900ZM42.700,24.300l-5,-4.300v2.900h-3.200v2.800h3.200v2.900Z" fill="url(#g14)"/><circle cx="30" cy="24.300" r="1" fill="url(#g14)"/><circle cx="33" cy="24.300" r="1" fill="url(#g14)"/><path d="M31.300,38.500V45" stroke="url(#g14)" stroke-width="2.400"/><path d="M14.500,46.600H48.500" stroke="url(#g14)" stroke-width="1.800"/><rect x="23" y="44.600" width="17" height="4.200" rx="1.500" fill="url(#g14)"/></svg></div>
<div class="a mt" style="top:374.3px;letter-spacing:0.45px">VPN</div>
<div class="a ml" style="top:430px"></div>
<div class="a" style="left:1px;top:432.9px;width:62px;height:62px"><svg width="62" height="60" viewBox="0 0 62 60" style="position:absolute;left:0;top:0;"><defs><linearGradient id="g15" gradientUnits="userSpaceOnUse" x1="0" y1="8" x2="0" y2="47"><stop offset="0" stop-color="#84c1ef"/><stop offset=".42" stop-color="#f6fbff"/><stop offset=".6" stop-color="#f6fbff"/><stop offset="1" stop-color="#7fbdec"/></linearGradient></defs><path d="M25.500,8.300c4.500,4.500 5.500,9.500 4.500,14c2,-1.500 3,-4 3,-6.500c4.500,5 6,11.500 4.500,17.500c-0.800,4.500 -2.500,9 -6.500,13H16.500c-4,-3.500 -6.500,-9 -5.500,-15c0.500,-3 1.500,-5 3.500,-7c0,2.500 0.500,4 1.500,5c0,-4 1,-7.500 3.500,-10.500c0,2 0.500,3.500 1.500,4.500c-0.500,-5.500 1,-10.500 4.500,-15Z" fill="url(#g15)"/><path d="M23.800,26.500c4,4.500 6.300,8.500 6.300,12.500a6.300,6.300 0 0 1 -12.600,0c0,-4 2.300,-8 6.300,-12.500Z" fill="#3a4144"/><path d="M23.800,34c2,2.500 3,4.300 3,6a3,3 0 0 1 -6,0c0,-1.700 1,-3.500 3,-6Z" fill="url(#g15)"/><g fill="none" stroke="url(#g15)" stroke-width="1.800"><rect x="37.500" y="28.300" width="13.300" height="5.400"/><path d="M43,33.700V39.800M50.800,33.700V39.800H34.500M26,45.900H50.800V39.800M39,39.800V45.900"/></g><path d="M18,46.300H51" stroke="url(#g15)" stroke-width="1.500"/></svg></div>
<div class="a mt" style="top:451.1px;letter-spacing:0.42px">Firewall</div>
<div class="a ml" style="top:507px"></div>
<div class="a" style="left:1px;top:509.7px;width:62px;height:62px"><svg width="62" height="62" viewBox="0 0 62 62" style="position:absolute;left:0;top:0;"><defs><linearGradient id="g16" gradientUnits="userSpaceOnUse" x1="0" y1="7" x2="0" y2="54"><stop offset="0" stop-color="#84c1ef"/><stop offset=".42" stop-color="#f6fbff"/><stop offset=".6" stop-color="#f6fbff"/><stop offset="1" stop-color="#7fbdec"/></linearGradient></defs><path d="M27.9,11.8L28.0,7.7L33.8,7.7L33.9,11.8L36.5,12.9L39.5,10.0L43.6,14.1L40.7,17.1L41.8,19.7L45.9,19.8L45.9,25.6L41.8,25.7L40.7,28.3L43.6,31.3L39.5,35.4L36.5,32.5L33.9,33.6L33.8,37.7L28.0,37.7L27.9,33.6L25.3,32.5L22.3,35.4L18.2,31.3L21.1,28.3L20.0,25.7L15.9,25.6L15.9,19.8L20.0,19.7L21.1,17.1L18.2,14.1L22.3,10.0L25.3,12.9Z" fill="url(#g16)" stroke="url(#g16)" stroke-width="1.500" stroke-linejoin="round"/><circle cx="30.9" cy="22.7" r="6.100" fill="#3a4144"/><rect x="20.400" y="32.600" width="21" height="22" rx="2" fill="#3a4144"/><rect x="21.600" y="33.600" width="18.800" height="20" rx="2.200" fill="url(#g16)"/><path d="M23.500,51.500L30,45" stroke="#3a4144" stroke-width="3" stroke-linecap="round"/><circle cx="32.600" cy="42.300" r="5.200" fill="#3a4144"/><path d="M32.800,42.200L38,37" stroke="#cfe6f8" stroke-width="2.600"/></svg></div>
<div class="a mt" style="top:527.9px;letter-spacing:0.1px">Administration</div>
<div class="a ml" style="top:584px"></div>
<div class="a" style="left:1px;top:586.5px;width:62px;height:62px"><svg width="62" height="60" viewBox="0 0 62 60" style="position:absolute;left:0;top:0;"><defs><linearGradient id="g17" gradientUnits="userSpaceOnUse" x1="0" y1="9" x2="0" y2="50"><stop offset="0" stop-color="#84c1ef"/><stop offset=".42" stop-color="#f6fbff"/><stop offset=".6" stop-color="#f6fbff"/><stop offset="1" stop-color="#7fbdec"/></linearGradient></defs><rect x="20.600" y="9.300" width="23.400" height="3.500" rx="1" fill="url(#g17)"/><rect x="20.600" y="15.300" width="23.400" height="26" fill="url(#g17)"/><path d="M25.500,20.400H35.500M25.500,24.800H34M25.500,29.200H31.500M25.500,33.600H30.500" stroke="#3a4144" stroke-width="2.100"/><path d="M51.300,15.500L33.500,34.200" stroke="#3a4144" stroke-width="6.200"/><path d="M51.600,15.200L35,32.600" stroke="url(#g17)" stroke-width="2.800"/><path d="M35.200,32.400L32.300,35.600l4.200,-1.600Z" fill="url(#g17)"/><path d="M14.200,39.500V45.300a2,2 0 0 0 2,2H47.400a2,2 0 0 0 2,-2V39.500" fill="none" stroke="url(#g17)" stroke-width="3.200" stroke-linecap="round"/><path d="M20.600,42.600H44" stroke="url(#g17)" stroke-width="2"/><path d="M22,44.700H40" stroke="#3a4144" stroke-width="1.300" opacity=".8"/><circle cx="18.500" cy="44.300" r="1.300" fill="#3a4144"/></svg></div>
<div class="a mt" style="top:604.7px;letter-spacing:0.16px">System Log</div>
</div>
<div class="a tab dj" style="left:362px;width:138px">VPN Status</div>
<div class="a tab dj" style="left:504px;width:140px">VPN Server</div>
<div class="a tab dj on" style="left:648px;width:132px">VPN Client</div>
<div class="a tab dj" style="left:784px;width:72px">TOR</div>
<div id="panel" class="a"></div>
<div class="a" style="left:378px;top:265px;font-weight:bold;font-size:25.6px;line-height:32px;white-space:nowrap;text-shadow:1.6px 1.6px 0 #000;-webkit-text-stroke:.4px #fff">OpenVPN Client Settings</div>
<div class="a" style="left:1216px;top:249px;width:182px;height:51px;border:2px solid #1a1e20;border-radius:13px 0 0 13px;background:#353e42;font-size:22.4px;line-height:45px;text-align:center;color:#93a9b8;padding-right:4px">OpenVPN</div>
<div class="a" style="left:1394px;top:246px;width:181px;height:57px;border:5px solid #e20000;border-radius:4px;background:linear-gradient(180deg,#687378 0,#566165 45%,#3f4a4e 100%);font-size:22.4px;line-height:45px;text-align:center;color:#e4e7e8;box-shadow:0 1px 2px rgba(0,0,0,.4)">PPTP/L2TP</div>
<div class="a txt" style="left:378px;top:336px">Before starting the service make sure you properly configure it, including the required keys,</div>
<div class="a txt" style="left:378px;top:370px">otherwise you will be unable to turn it on.</div>
<div class="a txt" style="left:378px;top:438px">In case of problem, see the <a style="font-weight:bold">System Log</a> for any error message related to openvpn.</div>
<div class="a th" style="top:484px">Client control</div>
<div class="a row" style="top:530px;height:62px"><div class="l">Select client instance</div><div class="sel" style="top:10px;width:124px">1: Client 1<i></i></div></div>
<div class="a row" style="top:592px;height:66px"><div class="l">Service state</div><div class="a" style="left:436px;top:6px;width:118px;height:51px;border-radius:10px;background:#49555a;border:1.6px solid #3f4b50;box-shadow:inset 0 1px 3px rgba(0,0,0,.35)"><div class="a" style="left:0.5px;top:1.5px;width:56px;height:46px;border-radius:8px;background:linear-gradient(180deg,#1f2d34 0,#131b20 40%,#050708 75%,#000 100%);box-shadow:1px 1px 2px rgba(0,0,0,.7)"></div><div class="a" style="left:65px;top:11.5px;font-weight:bold;font-size:21.5px;line-height:26px;color:#8f9ca1;letter-spacing:1px;margin-top:2px">OFF</div></div></div>
<div class="a row" style="top:658px;height:62px"><div class="l">Automatic start at boot time</div><div class="rad on" style="left:440.4px;top:20.5px"></div><div class="rl" style="left:464.70000000000005px;top:17.8px">Yes</div><div class="rad" style="left:506.4px;top:20.5px"></div><div class="rl" style="left:531.1px;top:17.8px">No</div></div>
<div class="a row" style="top:720px;height:62px"><div class="l">Description</div><div class="inp" style="left:438px;top:8px;width:388.5px">Client 1<svg class="a" style="right:5.5px;top:9px" width="27" height="24" viewBox="0 0 27 24"><rect x="1" y="2" width="24.500" height="19.500" rx="2.500" fill="none" stroke="#9aa7ab" stroke-width="1.800"/><circle cx="7.800" cy="8.300" r="2.700" fill="#9aa7ab"/><path d="M3.500,17.800c0,-4 2,-5.500 4.300,-5.500s4.300,1.500 4.300,5.500Z" fill="#9aa7ab"/><path d="M14,7.300H22.500M14,11.800H22.500M14,16.300H22.500" stroke="#9aa7ab" stroke-width="2.200"/></svg></div></div>
<div class="a row" style="top:782px;height:66px"><div class="l">Import .ovpn file</div><div class="a dj" style="left:438px;top:20px;width:134px;height:30px;background:#fff;border:1.6px solid #c4c4c4;color:#000;font-size:19px;line-height:26px;text-align:center;letter-spacing:.1px">Choose File</div><div class="a" style="left:580px;top:19px;font-size:19.2px;line-height:28px;color:#edb46d;white-space:nowrap;-webkit-text-stroke:.35px #edb46d">No file chosen</div><div class="a dj" style="left:806.5px;top:7px;width:194.500px;height:52px;border-radius:9px;background:linear-gradient(180deg,#25323a 0,#182026 45%,#0e1418 100%);font-weight:bold;font-size:19px;line-height:51px;text-align:center;text-shadow:1px 1px 0 #000">Upload</div></div>
<div class="a th" style="top:848px">Network Settings</div>
<div class="a row" style="top:894px;height:62px"><div class="l">Interface Type</div><div class="sel" style="top:10px;width:79.5px">TUN<i></i></div></div>
<div class="a row" style="top:956px;height:62px"><div class="l">Protocol</div><div class="sel" style="top:10px;width:78px">UDP<i></i></div></div>
<div class="a row" style="top:1018px;height:62px"><div class="l">Server Address and Port</div><div class="rl" style="left:434.5px;top:17.6px">Address:</div><div class="inp" style="left:514px;top:8px;width:388px">de.vpnunlimitedapp.com</div><div class="rl" style="left:984px;top:17.6px">Port:</div><div class="inp" style="left:1028px;top:8px;width:92px">1194</div></div>
<div class="a row" style="top:1080px;height:62px"><div class="l">Accept DNS Configuration</div><div class="sel" style="top:10px;width:120px">Exclusive<i></i></div></div>
<div class="a row" style="top:1142px;height:62px"><div class="l">Create NAT on tunnel</div><div class="rad on" style="left:440.4px;top:20.3px"></div><div class="rl" style="left:464.70000000000005px;top:17.6px">Yes</div><div class="rad" style="left:506.4px;top:20.3px"></div><div class="rl" style="left:531.1px;top:17.6px">No</div></div>
<div class="a th" style="top:1204px">Authentication Settings</div>
<div class="a row" style="top:1250px;height:62px"><div class="l">Authorization Mode</div><div class="sel" style="top:10px;width:123.5px">TLS<i></i></div></div>
<div class="a row" style="top:1312px;height:62px"><div class="l">Username/Password Authentication</div><div class="rad" style="left:440.4px;top:20.0px"></div><div class="rl" style="left:464.70000000000005px;top:17.3px">Yes</div><div class="rad on" style="left:506.4px;top:20.0px"></div><div class="rl" style="left:531.1px;top:17.3px">No</div></div>
<div class="a th" style="top:1374px">Crypto Settings</div>
<div class="a row" style="top:1420px;height:62px"><div class="l">Keys and Certificates</div><div class="a dj" style="left:436px;top:14px;width:76px;height:30px;background:#fff;border:1.6px solid #c4c4c4;color:#000;font-size:18.4px;line-height:26px;text-align:center">Edit...</div></div>
<div class="a row" style="top:1482px;height:62px"><div class="l">Cipher Negotiation</div><div class="sel" style="top:10px;width:221.5px">Enable (with fallback)<i></i></div></div>
</body>
</html>
